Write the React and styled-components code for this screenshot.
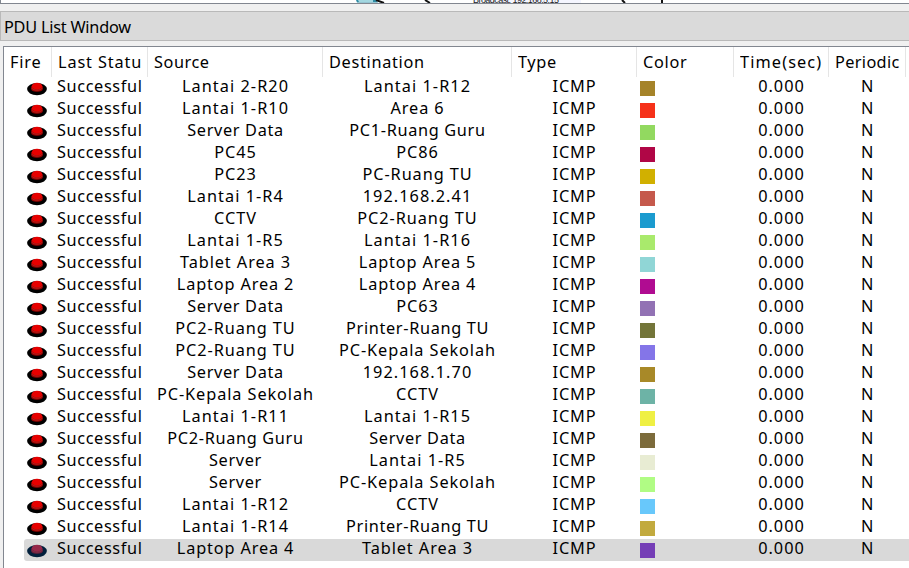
import React from "react";
import styled, { createGlobalStyle } from "styled-components";

const Global = createGlobalStyle`
  * { box-sizing: border-box; }
  body { margin: 0; background: #f0f0f0; overflow: hidden; }
`;

const Window = styled.main`
  display: flex;
  flex-direction: column;
  width: 909px;
  height: 568px;
  overflow: hidden;
  background: #f0f0f0;
  color: #000;
  font-family: "Noto Sans", "DejaVu Sans", sans-serif;
  font-size: 16.3px;
  letter-spacing: 0.62px;
`;

const Workspace = styled.div`
  flex: none;
  height: 4px;
  background: #fff;
  border-left: 1px solid #828790;
  border-bottom: 1px solid #828790;
  overflow: hidden;
`;

const Sketch = styled.svg`
  display: block;
`;

const TitleBar = styled.header`
  flex: none;
  height: 30px;
  margin-top: 7px;
  padding-left: 3px;
  background: #dadada;
  border: 1px solid #b9b9b9;
  border-right: 0;
  font-size: 16.3px;
  line-height: 31px;
  letter-spacing: -0.23px;
`;

const Panel = styled.section`
  flex: none;
  height: 522px;
  margin: 5px 0 0 3px;
  background: #fff;
  border: 1px solid #828790;
  border-right: 0;
  border-bottom: 0;
`;

const HeaderRow = styled.div`
  display: grid;
  grid-template-columns: 48px 96px 175px 189px 125px 97px 95px 77px;
  height: 30px;
`;

const HeaderCell = styled.div`
  padding-left: 6px;
  border-right: 1px solid #e5e5e5;
  line-height: 30px;
  white-space: nowrap;
  letter-spacing: ${(p) => p.$tracking}px;
`;

const Clip = styled.div`
  overflow: hidden;
  margin-right: ${(p) => p.$right || 0}px;
`;

const Row = styled.div`
  display: grid;
  grid-template-columns: 28px 96px 175px 189px 125px 97px 95px 77px;
  height: 22px;
  line-height: 18px;
  margin-left: 20px;
  border-radius: 3px 0 0 3px;
  background: ${(p) => (p.$selected ? "#d9d9d9" : "transparent")};
`;

const Cell = styled.div`
  height: 22px;
  text-align: center;
  white-space: nowrap;
  letter-spacing: ${(p) => p.$tracking || 0.62}px;
`;

const Status = styled(Cell)`
  padding-left: 5px;
  text-align: left;
`;

const FireIcon = styled.svg`
  display: block;
  margin: 5px 0 0 3px;
`;

const Swatch = styled.div`
  width: 15px;
  height: 15px;
  margin: 4px 0 0 3px;
  background: ${(p) => p.$color};
`;

const headers = [
  { label: "Fire", tracking: 0.8 },
  { label: "Last Status", tracking: 0.88, clip: 5 },
  { label: "Source", tracking: 0.55 },
  { label: "Destination", tracking: 0.7 },
  { label: "Type", tracking: 0.62 },
  { label: "Color", tracking: 0.7 },
  { label: "Time(sec)", tracking: 1.12 },
  { label: "Periodic", tracking: 0.36 },
];

const pdus = [
  ["Lantai 2-R20", "Lantai 1-R12", "#a58329"],
  ["Lantai 1-R10", "Area 6", "#f63119"],
  ["Server Data", "PC1-Ruang Guru", "#92d960"],
  ["PC45", "PC86", "#b00646"],
  ["PC23", "PC-Ruang TU", "#d1b000"],
  ["Lantai 1-R4", "192.168.2.41", "#c5594c"],
  ["CCTV", "PC2-Ruang TU", "#1b9bcf"],
  ["Lantai 1-R5", "Lantai 1-R16", "#a9ea6c"],
  ["Tablet Area 3", "Laptop Area 5", "#90d6d6"],
  ["Laptop Area 2", "Laptop Area 4", "#b00c91"],
  ["Server Data", "PC63", "#9272b4"],
  ["PC2-Ruang TU", "Printer-Ruang TU", "#737539"],
  ["PC2-Ruang TU", "PC-Kepala Sekolah", "#8475e8"],
  ["Server Data", "192.168.1.70", "#a88928"],
  ["PC-Kepala Sekolah", "CCTV", "#6db3a6"],
  ["Lantai 1-R11", "Lantai 1-R15", "#eff043"],
  ["PC2-Ruang Guru", "Server Data", "#7c6b3b"],
  ["Server", "Lantai 1-R5", "#e8ecd3"],
  ["Server", "PC-Kepala Sekolah", "#b0fc84"],
  ["Lantai 1-R12", "CCTV", "#68c8fb"],
  ["Lantai 1-R14", "Printer-Ruang TU", "#c2aa3e"],
  ["Laptop Area 4", "Tablet Area 3", "#753eb6"],
];

function trackingFor(name) {
  if (/^(Printer|Server)|Guru/.test(name)) return 0.66;
  if (/^(Lantai|192)/.test(name)) return 1.05;
  if (/^Laptop/.test(name)) return 0.85;
  return 0.92;
}

function Fire({ selected }) {
  const base = selected ? "#02203c" : "#000";
  const side = selected ? "#6b1f3b" : "#960000";
  const top = selected ? "#96284a" : "#e60000";
  const rim = selected ? "#a04a60" : "#e04a40";
  return (
    <FireIcon width="20" height="14" viewBox="0 0 20 14">
      <ellipse cx="10" cy="7.1" rx="9.9" ry="6.2" fill={base} />
      <path d="M4.2 4.2v2.8c0 3.7 11.6 3.7 11.6 0V4.2z" fill={side} />
      <ellipse cx="10" cy="4.2" rx="5.2" ry="3.4" fill={top} />
      <path d="M4.5 5.8C6 9 14 9 15.5 5.8" fill="none" stroke={rim} strokeWidth=".6" opacity=".75" />
    </FireIcon>
  );
}

export default function App() {
  return (
    <Window>
      <Global />
      <Workspace>
        <Sketch width="908" height="3" viewBox="1 0 908 3">
          <path d="M356 0h20l2 2.5h-21z" fill="#2f8ca5" />
          <path d="M358 0h15v2h-14z" fill="#a3d7e0" />
          <path d="M376 0l8 3M425 0l5 3M622 0l3 3M662 0v3" stroke="#111" strokeWidth="2" />
          <path d="M473 0h108v3H473z" fill="#f5f6ff" />
          <text x="473" y="3" textLength="86" fontFamily="Liberation Sans, sans-serif" fontSize="9" letterSpacing="0" fill="#222">
            Broadcast: 192.168.5.15
          </text>
        </Sketch>
      </Workspace>
      <TitleBar>PDU List Window</TitleBar>
      <Panel>
        <HeaderRow>
          {headers.map((h) => (
            <HeaderCell key={h.label} $tracking={h.tracking}>
              <Clip $right={h.clip}>{h.label}</Clip>
            </HeaderCell>
          ))}
        </HeaderRow>
        {pdus.map(([source, destination, color], i) => {
          const selected = i === pdus.length - 1;
          return (
            <Row key={i} $selected={selected}>
              <Fire selected={selected} />
              <Status>Successful</Status>
              <Cell $tracking={trackingFor(source)}>{source}</Cell>
              <Cell $tracking={trackingFor(destination)}>{destination}</Cell>
              <Cell $tracking={0.9}>ICMP</Cell>
              <Swatch $color={color} />
              <Cell $tracking={1}>0.000</Cell>
              <Cell>N</Cell>
            </Row>
          );
        })}
      </Panel>
    </Window>
  );
}
